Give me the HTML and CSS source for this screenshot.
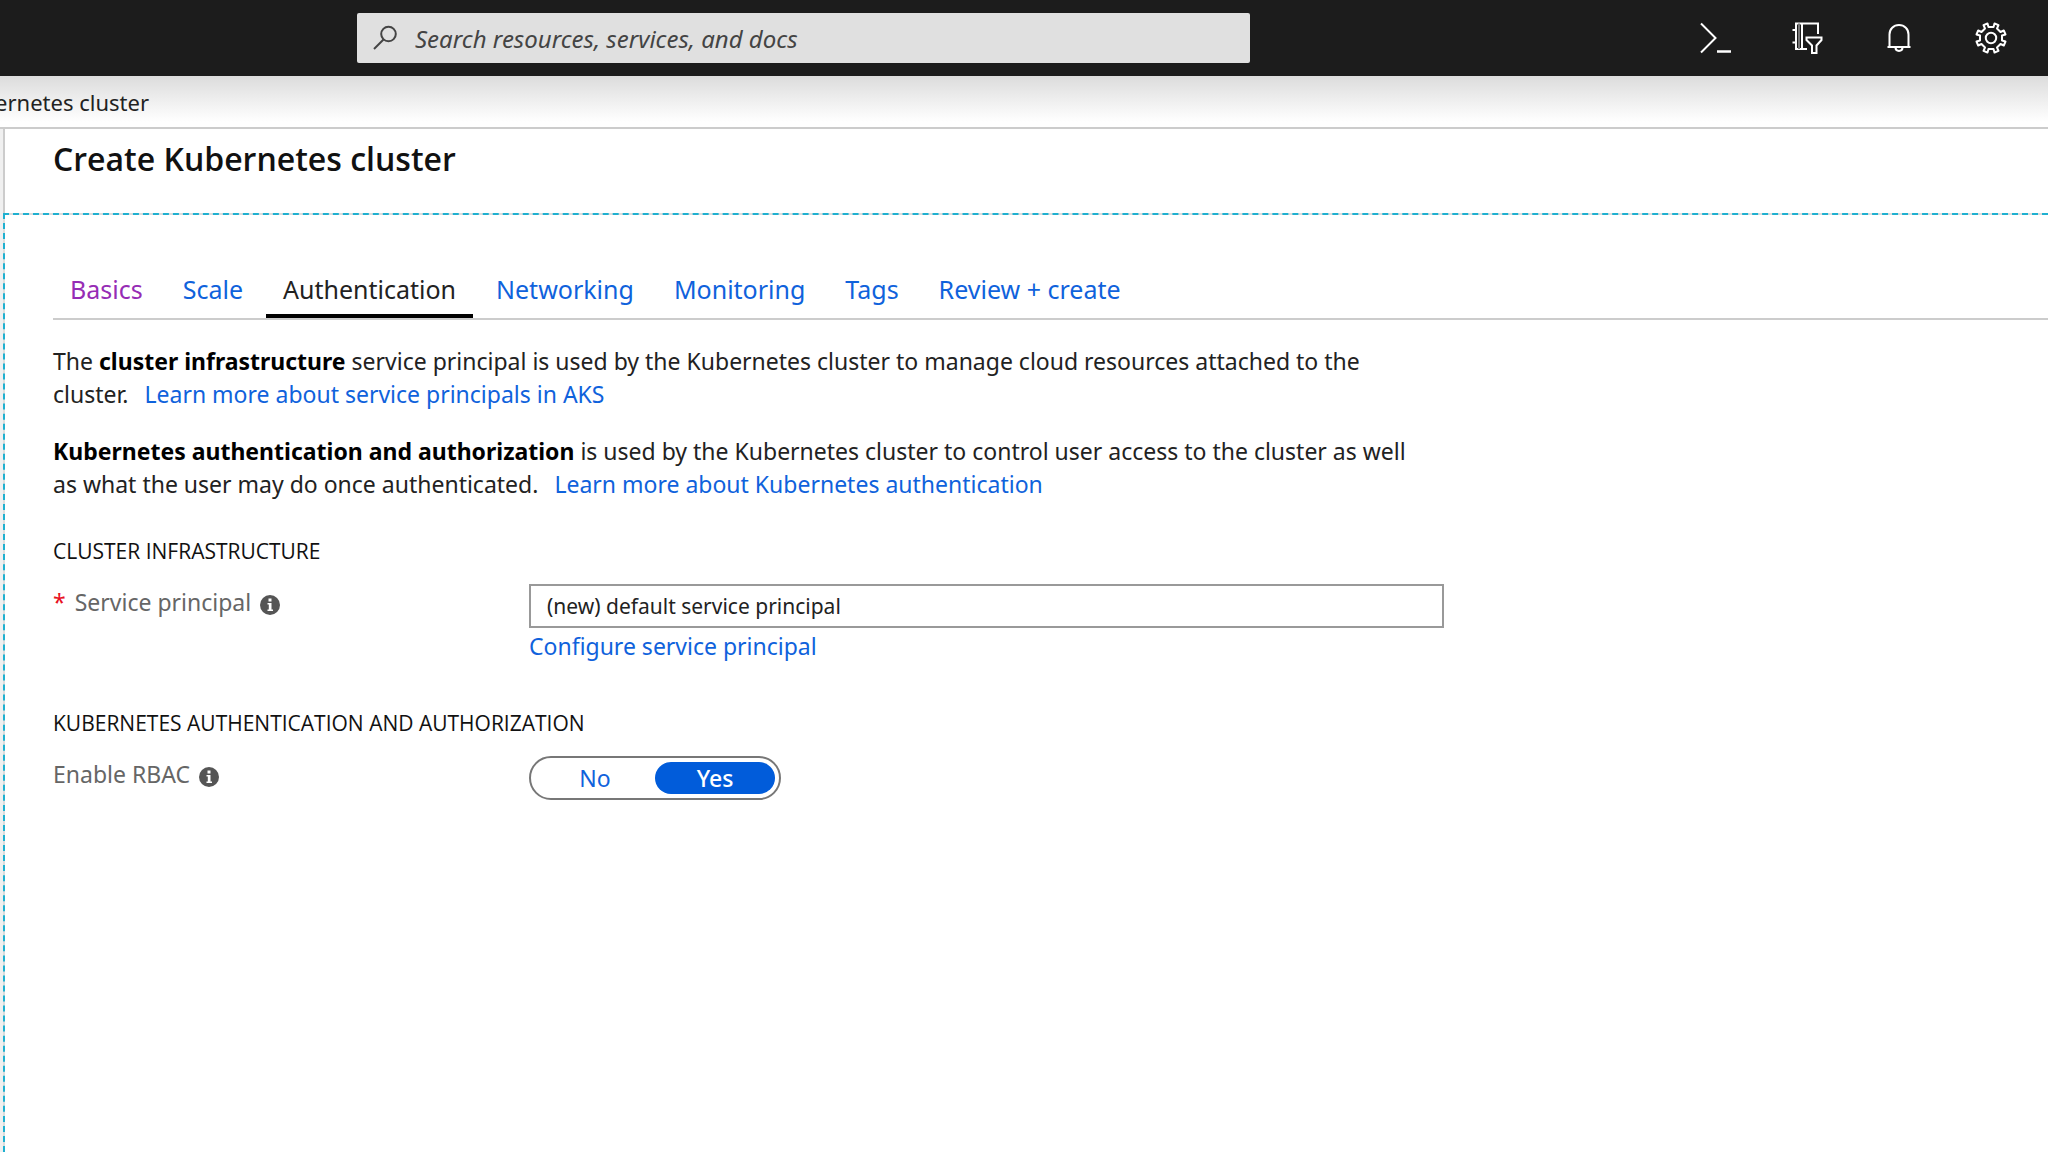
FILE: index.html
```html
<!DOCTYPE html>
<html lang="en">
<head>
    <meta charset="UTF-8">
    <meta name="viewport" content="width=device-width, initial-scale=1.0">
    <title>Create Kubernetes cluster</title>
    <link rel="stylesheet" href="styles.css">
</head>
<body>
    <header class="topbar">
        <div class="search">
            <svg class="search-icon" viewBox="0 0 26 26" aria-hidden="true">
                <circle cx="15.500" cy="9" r="7.300"/>
                <path d="M10.500 14.500L1 24"/>
            </svg>
            <input type="search" class="search-input" placeholder="Search resources, services, and docs" aria-label="Search resources, services, and docs">
        </div>
        <div class="topbar-actions">
            <button type="button" class="icon-btn" aria-label="Cloud Shell">
                <svg viewBox="0 0 32 32">
                    <path d="M2 1.500L16.500 16L2 30.500"/>
                    <path d="M18 29.500H32" stroke-width="2.500"/>
                </svg>
            </button>
            <button type="button" class="icon-btn" aria-label="Directory and subscription filter">
                <svg viewBox="0 0 32 32">
                    <path d="M27 12V1.500H5V27H16M11 1.500V27M1.500 8H5M1.500 20.500H5"/>
                    <path d="M8 1.500V27" stroke="#777"/>
                    <path d="M15.500 15.500H30.500V18L25.500 23.500V31H21V23.500L15.500 18Z"/>
                </svg>
            </button>
            <button type="button" class="icon-btn" aria-label="Notifications">
                <svg viewBox="0 0 32 32">
                    <path d="M4.500 25H27.500M6.500 25V12.500C6.500 7 10.500 3 16 3S25.500 7 25.500 12.500V25M12.500 25.500C12.500 30 19.500 30 19.500 25.500"/>
                </svg>
            </button>
            <button type="button" class="icon-btn" aria-label="Settings">
                <svg viewBox="0 0 32 32">
                    <path d="M12.500 1.500L13.500 5H18.500L19.500 1.500L23.500 3.200L22 6.500L25.500 10L28.800 8.500L30.500 12.500L27 13.500V18.500L30.500 19.500L28.800 23.500L25.500 22L22 25.500L23.500 28.800L19.500 30.500L18.500 27H13.500L12.500 30.500L8.500 28.800L10 25.500L6.500 22L3.200 23.500L1.500 19.500L5 18.500V13.500L1.500 12.500L3.200 8.500L6.500 10L10 6.500L8.500 3.200Z" stroke-linejoin="round"/>
                    <circle cx="16" cy="16" r="5.200"/>
                </svg>
            </button>
        </div>
    </header>

    <div class="breadcrumb"><span>ernetes cluster</span></div>

    <main class="blade">
        <div class="blade-header">
            <h1>Create Kubernetes cluster</h1>
        </div>

        <div class="blade-body">
            <nav class="tabs">
                <a href="#" class="tab visited">Basics</a>
                <a href="#" class="tab">Scale</a>
                <a href="#" class="tab active">Authentication</a>
                <a href="#" class="tab">Networking</a>
                <a href="#" class="tab">Monitoring</a>
                <a href="#" class="tab">Tags</a>
                <a href="#" class="tab">Review + create</a>
            </nav>

            <form class="content">
                <p>The <b>cluster infrastructure</b> service principal is used by the Kubernetes cluster to manage cloud resources attached to the cluster. <a href="#" class="more">Learn more about service principals in AKS</a></p>
                <p><b>Kubernetes authentication and authorization</b> is used by the Kubernetes cluster to control user access to the cluster as well as what the user may do once authenticated. <a href="#" class="more">Learn more about Kubernetes authentication</a></p>

                <section>
                    <h2>CLUSTER INFRASTRUCTURE</h2>
                    <div class="row">
                        <label class="row-label" for="principal">
                            <span class="required">*</span>
                            Service principal
                            <svg class="info" viewBox="0 0 20 20" aria-hidden="true">
                                <circle cx="10" cy="10" r="10"/>
                                <path d="M8.500 3.500H11.500V6.500H8.500ZM7.500 8H11.500V14.500H13V16H7.500V14.500H8.800V9.500H7.500Z"/>
                            </svg>
                        </label>
                        <div class="field">
                            <input type="text" id="principal" class="text-input" value="(new) default service principal">
                            <a href="#">Configure service principal</a>
                        </div>
                    </div>
                </section>

                <section>
                    <h2>KUBERNETES AUTHENTICATION AND AUTHORIZATION</h2>
                    <div class="row">
                        <span class="row-label" id="rbacLabel">
                            Enable RBAC
                            <svg class="info" viewBox="0 0 20 20" aria-hidden="true">
                                <circle cx="10" cy="10" r="10"/>
                                <path d="M8.500 3.500H11.500V6.500H8.500ZM7.500 8H11.500V14.500H13V16H7.500V14.500H8.800V9.500H7.500Z"/>
                            </svg>
                        </span>
                        <div class="field">
                            <div class="toggle" role="radiogroup" aria-labelledby="rbacLabel">
                                <input type="radio" name="rbac" id="rbacNo">
                                <label for="rbacNo">No</label>
                                <input type="radio" name="rbac" id="rbacYes" checked>
                                <label for="rbacYes">Yes</label>
                            </div>
                        </div>
                    </div>
                </section>
            </form>
        </div>
    </main>
</body>
</html>
```
FILE: styles.css
```css
/* General */
* {
    margin: 0;
    padding: 0;
    box-sizing: border-box;
}

body {
    display: flex;
    flex-direction: column;
    min-height: 100vh;
    background: #f0f0f0;
    color: #222;
    font-family: "Noto Sans", "Open Sans", sans-serif;
    font-size: 23px;
    line-height: 33px;
    overflow-x: hidden;
}

a {
    color: #0f62dc;
    text-decoration: none;
}

input,
button {
    font-family: inherit;
}

/* Top bar */
.topbar {
    display: flex;
    justify-content: space-between;
    align-items: center;
    height: 76px;
    padding: 0 41px 0 357px;
    background: #1c1c1c;
}

.search {
    display: flex;
    align-items: center;
    gap: 16px;
    width: 893px;
    height: 50px;
    padding: 0 16px;
    background: #e0e0e0;
    border-radius: 2px;
}

.search-icon {
    width: 26px;
    height: 26px;
    fill: none;
    stroke: #444;
    stroke-width: 2;
}

.search-input {
    flex: 1;
    border: none;
    outline: none;
    background: transparent;
    font-size: 24px;
    font-style: italic;
}

.search-input::placeholder {
    color: #444;
}

.topbar-actions {
    display: flex;
    gap: 60px;
}

.icon-btn {
    width: 32px;
    height: 32px;
    border: none;
    background: none;
}

.icon-btn svg {
    display: block;
    width: 32px;
    height: 32px;
    fill: none;
    stroke: #fff;
    stroke-width: 2;
}

/* Breadcrumb */
.breadcrumb {
    display: flex;
    justify-content: flex-end;
    align-items: center;
    height: 51px;
    padding-top: 2px;
    padding-right: calc(100% - 149px);
    background: linear-gradient(#dcdcdc, #fff 90%);
    font-size: 22px;
    white-space: nowrap;
}

/* Blade */
.blade {
    flex: 1;
    display: flex;
    flex-direction: column;
    border-top: 2px solid #ccc;
}

.blade-header {
    height: 84px;
    margin-left: 3px;
    padding: 10px 48px;
    border-left: 2px solid #ccc;
    background: #fff;
}

h1 {
    font-family: "Open Sans", "Noto Sans", sans-serif;
    font-size: 32px;
    font-weight: 600;
    line-height: 40px;
    color: #111;
}

.blade-body {
    flex: 1;
    margin-left: 3px;
    padding: 52px 0 0 48px;
    border-top: 2px dashed #1fb0d0;
    border-left: 2px dashed #1fb0d0;
    background: linear-gradient(#fff, #fff) padding-box, #ddd border-box;
}

/* Tabs */
.tabs {
    display: flex;
    gap: 6px;
    border-bottom: 2px solid #ccc;
}

.tab {
    padding: 6px 17px 8px;
    border-bottom: 4px solid transparent;
    font-size: 25px;
    line-height: 33px;
}

.tab.visited {
    color: #962cb5;
}

.tab.active {
    color: #222;
    border-bottom-color: #000;
}

/* Form */
.content {
    max-width: 1391px;
    padding-top: 25px;
}

.content p {
    max-width: 1372px;
    margin-bottom: 24px;
}

.content b {
    color: #000;
}

.more {
    margin-left: 10px;
}

section {
    padding-top: 10px;
    margin-bottom: 34px;
}

h2 {
    margin-bottom: 16px;
    font-family: "Open Sans", "Noto Sans", sans-serif;
    font-size: 21px;
    font-weight: 400;
    line-height: 33px;
    color: #111;
}

.row {
    display: flex;
}

.row-label {
    display: flex;
    gap: 9px;
    width: 476px;
    padding-top: 2px;
    color: #666;
}

.required {
    color: #e81123;
}

.info {
    width: 20px;
    height: 20px;
    margin-top: 9px;
    fill: #555;
}

.info path {
    fill: #fff;
}

.field {
    flex: 1;
}

.text-input {
    display: block;
    width: 100%;
    height: 44px;
    margin-bottom: 2px;
    padding: 0 16px;
    border: 2px solid #999;
    background: #fff;
    color: #222;
    font-size: 21px;
}

.toggle {
    display: flex;
    width: 252px;
    height: 44px;
    padding: 4px;
    border: 2px solid #777;
    border-radius: 22px;
    background: #fff;
}

.toggle input {
    position: absolute;
    opacity: 0;
}

.toggle label {
    flex: 1;
    border-radius: 16px;
    color: #0f62dc;
    line-height: 32px;
    text-align: center;
}

.toggle input:checked + label {
    background: #015cda;
    color: #fff;
    font-weight: 500;
}
```
